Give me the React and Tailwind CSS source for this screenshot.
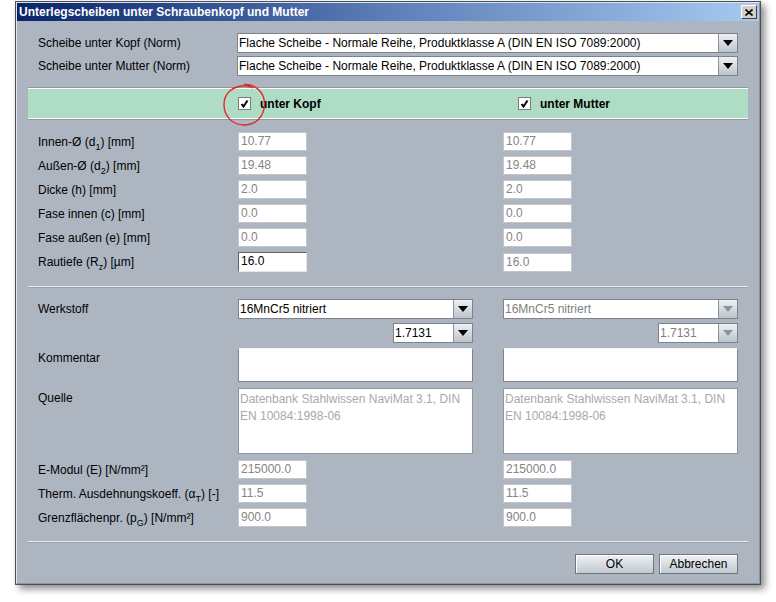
import React from "react";

const COLS = "grid grid-cols-[200px_235px_30px_235px]";

function Arrow({ disabled }) {
  return (
    <div className="w-[19px] h-full border-l border-[#8a9199] bg-gradient-to-b from-[#eef1f4] to-[#bcc4cc] flex items-center justify-center">
      <svg width="10" height="6" viewBox="0 0 10 6">
        <path d="M0 0 L10 0 L5 6 Z" fill={disabled ? "#8d939a" : "#000"} />
      </svg>
    </div>
  );
}

function Combo({ value, className = "", disabled }) {
  return (
    <div className={`h-[20px] flex bg-white border border-[#7b838c] ${className}`}>
      <div className={`flex-1 px-[1px] leading-[18px] whitespace-nowrap overflow-hidden ${disabled ? "text-[#7f7f7f]" : "text-black"}`}>
        {value}
      </div>
      <Arrow disabled={disabled} />
    </div>
  );
}

function Field({ value, active, tall }) {
  return (
    <div
      className={`w-[69px] ${tall ? "h-[20px]" : "h-[19px]"} bg-white px-[2px] leading-[17px] ${
        active
          ? "border border-[#5e6064] border-r-[#e4e6e8] border-b-[#e4e6e8] text-black"
          : "border border-[#c3c7cb] text-[#858585]"
      }`}
    >
      {value}
    </div>
  );
}

function CheckBox() {
  return (
    <div className="w-[13px] h-[13px] bg-white border border-[#7c7c7c] flex items-center justify-center">
      <svg width="9" height="9" viewBox="0 0 9 9">
        <path d="M1.5 5 L3.5 7.5 L7.5 1.5" stroke="#000" strokeWidth="2" fill="none" />
      </svg>
    </div>
  );
}

function Sep() {
  return <div className="h-[2px] border-t border-[#e9ecef] border-b border-b-[#9aa2aa]" />;
}

function Row({ label, left, right, activeLeft, tall }) {
  return (
    <div className={`${COLS} items-center`}>
      <div className="whitespace-nowrap">{label}</div>
      <div>
        <Field value={left} active={activeLeft} tall={tall} />
      </div>
      <div />
      <div>
        <Field value={right} />
      </div>
    </div>
  );
}

const sub = (t) => <sub className="text-[9px] bottom-[-4px]">{t}</sub>;

export default function App() {
  return (
    <div className="min-h-screen bg-white font-['Liberation_Sans',Arial,sans-serif] text-[12px] text-black">
      <div className="ml-[15px] mt-[1px] w-[746px] border border-[#4b4f55] shadow-[4px_4px_7px_rgba(0,0,0,0.45)]">
        <div className="border border-[#e0e4e8] border-r-[#8c939b] border-b-[#8c939b] bg-[#adb6c0]">
          {/* Title bar */}
          <div className="h-[18px] flex items-center justify-between pl-[2px] pr-[2px] bg-gradient-to-r from-[#0a246a] via-[#5d7fb8] to-[#a6caf0]">
            <span className="text-white font-bold text-[12px] leading-[18px]">
              Unterlegscheiben unter Schraubenkopf und Mutter
            </span>
            <div className="w-[16px] h-[14px] bg-[#d4d0c8] border border-[#fff] border-r-[#404040] border-b-[#404040] flex items-center justify-center">
              <svg width="8" height="7" viewBox="0 0 8 7">
                <path d="M0.5 0.5 L7.5 6.5 M7.5 0.5 L0.5 6.5" stroke="#000" strokeWidth="1.6" />
              </svg>
            </div>
          </div>

          {/* Body */}
          <div className="px-[11px] pt-[12px] pb-[9px]">
            <div className="pl-[10px] flex flex-col gap-[3px]">
              <div className="flex items-center">
                <div className="w-[199px]">Scheibe unter Kopf (Norm)</div>
                <Combo className="w-[501px]" value="Flache Scheibe - Normale Reihe, Produktklasse A (DIN EN ISO 7089:2000)" />
              </div>
              <div className="flex items-center">
                <div className="w-[199px]">Scheibe unter Mutter (Norm)</div>
                <Combo className="w-[501px]" value="Flache Scheibe - Normale Reihe, Produktklasse A (DIN EN ISO 7089:2000)" />
              </div>
            </div>

            {/* green band */}
            <div className="mt-[11px] h-[33px] border-y border-[#8f979f] bg-[#afdcc4] shadow-[inset_0_1px_0_#fff,inset_0_-1px_0_#fff] flex items-center">
              <div className={`pl-[10px] ${COLS} items-center`}>
                <div />
                <div className="flex items-center gap-[9px] font-bold">
                  <div className="relative">
                    <CheckBox />
                    <svg className="absolute left-[-17px] top-[-15px]" width="46" height="46" viewBox="0 0 46 46">
                      <path
                        d="M23 2.5 C35 2 44 11 43.5 23 C43 35 34 43.5 22.5 43 C11 42.5 3 34 3 22.5 C3 11 12 3.5 25 3.8 C28 4 30.5 5 32 6"
                        stroke="#e4262b"
                        strokeWidth="1.4"
                        fill="none"
                      />
                    </svg>
                  </div>
                  <span>unter Kopf</span>
                </div>
                <div />
                <div className="pl-[15px] flex items-center gap-[9px] font-bold">
                  <CheckBox />
                  <span>unter Mutter</span>
                </div>
              </div>
            </div>

            {/* dimensions */}
            <div className="mt-[12px] pl-[10px] flex flex-col gap-[5px]">
              <Row label={<>Innen-Ø (d{sub("1")}) [mm]</>} left="10.77" right="10.77" />
              <Row label={<>Außen-Ø (d{sub("2")}) [mm]</>} left="19.48" right="19.48" />
              <Row label="Dicke (h) [mm]" left="2.0" right="2.0" />
              <Row label="Fase innen (c) [mm]" left="0.0" right="0.0" />
              <Row label="Fase außen (e) [mm]" left="0.0" right="0.0" />
              <Row label={<>Rautiefe (R{sub("z")}) [µm]</>} left="16.0" right="16.0" activeLeft tall />
            </div>

            <div className="mt-[14px]">
              <Sep />
            </div>

            {/* material */}
            <div className="mt-[11px] pl-[10px] flex flex-col">
              <div className={`${COLS} items-start`}>
                <div className="leading-[20px]">Werkstoff</div>
                <div className="flex flex-col items-end gap-[4px]">
                  <Combo className="w-full" value="16MnCr5 nitriert" />
                  <Combo className="w-[80px]" value="1.7131" />
                </div>
                <div />
                <div className="flex flex-col items-end gap-[4px]">
                  <Combo className="w-full" value="16MnCr5 nitriert" disabled />
                  <Combo className="w-[80px]" value="1.7131" disabled />
                </div>
              </div>

              <div className={`${COLS} items-start mt-[5px]`}>
                <div className="pt-[3px] leading-[14px]">Kommentar</div>
                <div className="h-[34px] bg-white border border-[#7b838c] border-t-[#f4f4f4]" />
                <div />
                <div className="h-[34px] bg-white border border-[#7b838c] border-t-[#f4f4f4]" />
              </div>

              <div className={`${COLS} items-start mt-[6px]`}>
                <div className="pt-[3px] leading-[14px]">Quelle</div>
                <div className="h-[66px] bg-white border border-[#8e959c] px-[1px] pt-[2px] leading-[17px] text-[#a9a9a9]">
                  Datenbank Stahlwissen NaviMat 3.1, DIN EN 10084:1998-06
                </div>
                <div />
                <div className="h-[66px] bg-white border border-[#8e959c] px-[1px] pt-[2px] leading-[17px] text-[#a9a9a9]">
                  Datenbank Stahlwissen NaviMat 3.1, DIN EN 10084:1998-06
                </div>
              </div>

              <div className="mt-[6px] flex flex-col gap-[5px]">
                <Row label="E-Modul (E) [N/mm²]" left="215000.0" right="215000.0" />
                <Row label={<>Therm. Ausdehnungskoeff. (α{sub("T")}) [-]</>} left="11.5" right="11.5" />
                <Row label={<>Grenzflächenpr. (p{sub("G")}) [N/mm²]</>} left="900.0" right="900.0" />
              </div>
            </div>

            <div className="mt-[14px]">
              <Sep />
            </div>

            {/* buttons */}
            <div className="mt-[11px] pr-[10px] flex justify-end gap-[5px]">
              <button className="w-[79px] h-[20px] border border-[#6f767e] bg-gradient-to-b from-[#eef1f5] to-[#c3cad2] shadow-[inset_1px_1px_0_#fff] text-[12px] leading-[18px]">
                OK
              </button>
              <button className="w-[79px] h-[20px] border border-[#6f767e] bg-gradient-to-b from-[#eef1f5] to-[#c3cad2] shadow-[inset_1px_1px_0_#fff] text-[12px] leading-[18px]">
                Abbrechen
              </button>
            </div>
          </div>
        </div>
      </div>
    </div>
  );
}
